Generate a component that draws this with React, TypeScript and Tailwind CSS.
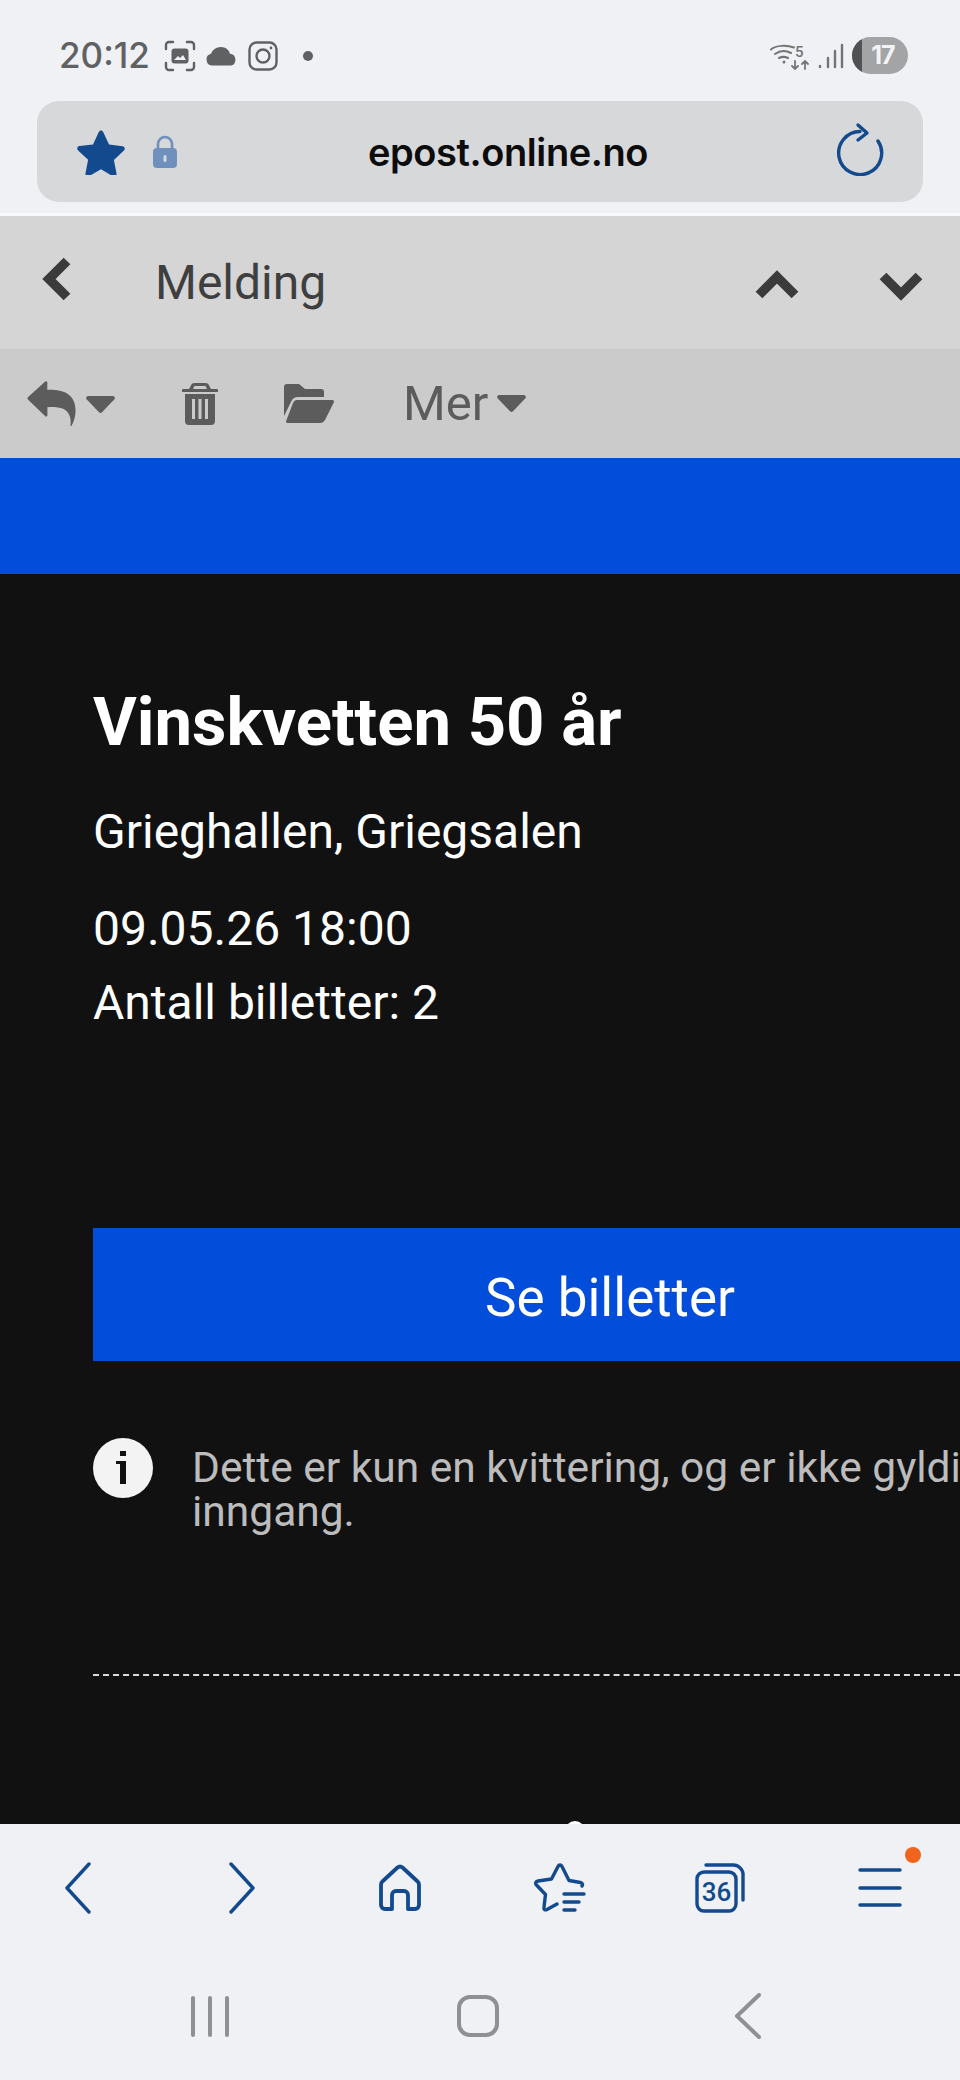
const blue = "#134a8e";

function Screenshot() {
	return (
		<svg width="32" height="32" viewBox="0 0 32 32" fill="none" stroke="#606162" strokeWidth="2.4" strokeLinecap="round">
			<path d="M2 9V5a3 3 0 0 1 3-3h4M23 2h4a3 3 0 0 1 3 3v4M30 23v4a3 3 0 0 1-3 3h-4M9 30H5a3 3 0 0 1-3-3v-4" />
			<rect x="7.5" y="8.5" width="17" height="15" rx="3" fill="#606162" stroke="none" />
			<path d="M10 20l4-4 2 2 3-3 3 5z" fill="#eff1f5" stroke="none" />
		</svg>
	);
}

function Cloud() {
	return (
		<svg width="33" height="20" viewBox="0 0 32 20" fill="#606162">
			<path d="M7 19.5a6 6 0 0 1-1.5-11.800A10 10 0 0 1 15.500 1a9.500 9.500 0 0 1 9 6.800 6 6 0 0 1 1.200 11.700z" />
		</svg>
	);
}

function Instagram() {
	return (
		<svg width="30" height="30" viewBox="0 0 30 30" fill="none" stroke="#606162" strokeWidth="2.4">
			<rect x="1.5" y="1.5" width="27" height="27" rx="7" />
			<circle cx="15" cy="15" r="6.5" />
			<circle cx="23" cy="7" r="1.4" fill="#606162" stroke="none" />
		</svg>
	);
}

function Wifi5g() {
	return (
		<svg width="40" height="28" viewBox="0 0 40 28" fill="none" stroke="#737475" strokeWidth="2" strokeLinecap="round">
			<path d="M1 7.500C6 3 17 3 24 5.500M5 12c5-3.500 11-3.500 16-1M9 16c3-1.500 6-1.500 9 0" />
			<circle cx="14" cy="20" r="1.500" fill="#737475" stroke="none" />
			<path d="M25 19v8M22 24l3 3 3-3M35 27v-8M32 22l3-3 3 3" strokeWidth="1.800" />
			<text x="25" y="15" fontSize="15" fontFamily="Roboto, sans-serif" fill="#737475" stroke="none" fontWeight="500">5</text>
		</svg>
	);
}

function Signal() {
	return (
		<svg width="26" height="26" viewBox="0 0 26 26" fill="none" stroke="#737475" strokeWidth="2.400" strokeLinecap="round">
			<path d="M2 24v-1M10 24v-9M17 24V8M24 24V2" />
		</svg>
	);
}

function Reload() {
	return (
		<svg width="48" height="54" viewBox="0 0 48 54" fill="none" stroke={blue} strokeWidth="3.400" strokeLinecap="round" strokeLinejoin="round">
			<path d="M42 19A21.500 21.500 0 1 1 24 9.500" />
			<path d="M22 3l9 8-9 7" />
		</svg>
	);
}

function Caret() {
	return (
		<svg width="29" height="17" viewBox="0 0 27 16" fill="#5c5c5c">
			<path d="M2 0h23a2 2 0 0 1 1.400 3.400L14.900 15.200a2 2 0 0 1-2.800 0L.6 3.400A2 2 0 0 1 2 0z" />
		</svg>
	);
}

function Reply() {
	return (
		<svg width="49" height="45" viewBox="0 0 46 43" fill="#5c5c5c">
			<path d="M17 .5c1-.7 2-.2 2 1.200V8.500c14-.5 27 3 27 20 0 6-2 11-4 14.500-.4.500-1 .2-.9-.5 1-7-1-13-7-16-4-1.500-10-2-15-1.500v7.500c0 1.400-1 1.900-2 1.200L.7 18c-.9-.8-.9-2 0-2.800z" />
		</svg>
	);
}

function Trash() {
	return (
		<svg width="36" height="42" viewBox="0 0 36 42" fill="#5c5c5c">
			<path fillRule="evenodd" d="M12 0h12a3 3 0 0 1 2.600 1.500L29 6h6a1 1 0 0 1 1 1v2H0V7a1 1 0 0 1 1-1h6l2.400-4.500A3 3 0 0 1 12 0zm.5 3L11 6h14l-1.500-3z" />
			<path fillRule="evenodd" d="M3 11h30v27a4 4 0 0 1-4 4H7a4 4 0 0 1-4-4zm7 5v20h3V16zm6.500 0v20h3V16zm6.500 0v20h3V16z" />
		</svg>
	);
}

function Folder() {
	return (
		<svg width="50" height="40" viewBox="0 0 50 40" fill="#5c5c5c">
			<path d="M0 3a3 3 0 0 1 3-3h12l6 5h16a3 3 0 0 1 3 3v5H14c-3 0-5 1-6.500 4L0 32z" />
			<path d="M13 16h35c2 0 2.500 1.500 1.500 3L41 36c-1 2-3 3-5 3H4c-2 0-2.500-1.500-1.500-3L9 19c1-2 2-3 4-3z" />
		</svg>
	);
}

function Chevron({ d, w, h }: { d: string; w: number; h: number }) {
	return (
		<svg width={w} height={h} viewBox={`0 0 ${w} ${h}`} fill="none" stroke="#3b3b3b" strokeWidth="9.500" strokeLinejoin="miter" className="block">
			<path d={d} />
		</svg>
	);
}

function SideNavIcon({ d }: { d: string }) {
	return (
		<svg width="28" height="52" viewBox="0 0 28 52" fill="none" stroke={blue} strokeWidth="3.400" strokeLinecap="round" strokeLinejoin="round">
			<path d={d} />
		</svg>
	);
}

function HomeIcon() {
	return (
		<svg width="46" height="48" viewBox="0 0 46 48" fill="none" stroke={blue} strokeWidth="3.800" strokeLinejoin="round">
			<path d="M4 20.500a4 4 0 0 1 1.400-3L20.500 3.500a3.800 3.800 0 0 1 5 0l15.100 14a4 4 0 0 1 1.400 3V41a4 4 0 0 1-4 4H31V31a4 4 0 0 0-4-4h-8a4 4 0 0 0-4 4v14H8a4 4 0 0 1-4-4z" />
		</svg>
	);
}

function StarList() {
	return (
		<svg width="52" height="50" viewBox="0 0 52 50" fill="none" stroke={blue} strokeWidth="3.400" strokeLinecap="round" strokeLinejoin="round">
			<path d="M48 23c1-1.500.5-3-1.500-3.500L35 17.500 28 3.500c-1-2-3-2-4 0L17.500 16 4 18c-2.500.5-3 2.500-1.500 4l9 9.500L10 44c-.5 2.500 1 3.500 3 2.500L23 41" />
			<path d="M30 31h20M30 39h15M30 47h11" />
		</svg>
	);
}

function TabsIcon() {
	return (
		<div className="relative w-[50px] h-[50px]">
			<svg className="absolute inset-0" width="50" height="50" viewBox="0 0 50 50" fill="none" stroke={blue} strokeWidth="3.400" strokeLinecap="round">
				<path d="M11 2h26a10 10 0 0 1 11 11v24" />
				<rect x="2" y="9" width="39" height="39" rx="7" />
			</svg>
			<span className="absolute left-[2px] top-[9px] w-[39px] h-[39px] flex items-center justify-center font-['Roboto',sans-serif] font-medium text-[26px] leading-none text-[#134a8e]">36</span>
		</div>
	);
}

function MenuIcon() {
	return (
		<div className="relative">
			<svg width="44" height="42" viewBox="0 0 44 42" fill="none" stroke={blue} strokeWidth="3.400" strokeLinecap="round" className="block">
				<path d="M2 3h40M2 21h40M2 38h40" />
			</svg>
			<span className="absolute right-[-19px] top-[-20px] w-4 h-4 rounded-full bg-[#f0641e]"></span>
		</div>
	);
}

export default function App() {
	return (
		<div className="w-[960px] h-[2080px] flex flex-col overflow-hidden bg-[#eff1f5] font-['Roboto',sans-serif]">
			{/* status bar */}
			<div className="h-[101px] shrink-0 flex items-center pl-[59px] pr-[52px] pt-[10px]">
				<span className="font-['Inter',sans-serif] font-medium text-[35px] leading-none text-[#606162] w-[105px]">20:12</span>
				<Screenshot />
				<div className="ml-[9px]"><Cloud /></div>
				<div className="ml-[10px]"><Instagram /></div>
				<span className="ml-[25px] w-[10px] h-[10px] rounded-full bg-[#606162]"></span>
				<div className="ml-auto"><Wifi5g /></div>
				<div className="ml-[8px]"><Signal /></div>
				<div className="relative ml-[8px] w-[56px] h-[37px] rounded-full bg-[#a3a4a6] overflow-hidden flex items-center justify-center pl-[6px]">
					<span className="absolute left-0 top-0 bottom-0 w-[10px] bg-[#505152]"></span>
					<span className="relative font-['Inter',sans-serif] font-bold text-[25px] leading-none text-[#f2f3f5] tracking-[-1px]">17</span>
				</div>
			</div>

			{/* address bar */}
			<div className="h-[101px] shrink-0 mx-[37px] rounded-[22px] bg-[#d6d8da] relative flex items-center pl-[40px] pr-[39px]">
				<svg width="48" height="46" viewBox="0 0 48 46" fill={blue}>
					<path d="M24 1.500c1 0 1.800.6 2.200 1.500l5.800 12.500 13.500 1.800c2.200.3 3 2.800 1.400 4.300l-10 9.400 2.600 13.400c.4 2.200-1.900 3.800-3.800 2.800L24 40.300l-11.700 6.700c-1.900 1-4.200-.6-3.800-2.800l2.600-13.400-10-9.400c-1.600-1.500-.8-4 1.400-4.300L16 15.500 21.800 3c.4-.9 1.200-1.500 2.200-1.500z" />
				</svg>
				<svg className="ml-[27px]" width="26" height="34" viewBox="0 0 26 34" fill="#6f90bd">
					<path d="M6 14V9a7 7 0 0 1 14 0v5" fill="none" stroke="#6f90bd" strokeWidth="2.600" />
					<rect x="1" y="13" width="24" height="20" rx="4" />
					<rect x="11.500" y="20" width="3" height="7" rx="1.500" fill="#d6d8da" />
				</svg>
				<span className="absolute left-[56px] right-0 text-center font-['Inter',sans-serif] font-semibold text-[38px] leading-none text-[#0c0c0c] tracking-[-0.4px]">epost.online.no</span>
				<div className="ml-auto pb-[6px]"><Reload /></div>
			</div>
			<div className="h-[11px] shrink-0"></div>
			<div className="h-[3px] shrink-0 bg-[#f8f9fb]"></div>

			{/* header */}
			<div className="h-[133px] shrink-0 bg-[#d5d5d5] flex items-center pl-[41px] pr-[35px]">
				<div className="mb-[7px]"><Chevron w={32} h={48} d="M26 6L8 24l18 18" /></div>
				<span className="ml-[82px] text-[48px] leading-none text-[#3f3f3f]">Melding</span>
				<div className="ml-auto mt-[4px]"><Chevron w={48} h={32} d="M6 26L24 8l18 18" /></div>
				<div className="ml-[76px] mt-[6px]"><Chevron w={48} h={32} d="M6 6l18 18L42 6" /></div>
			</div>

			{/* toolbar */}
			<div className="h-[109px] shrink-0 bg-[#cbcbcb] flex items-center pl-[27px] text-[#5c5c5c]">
				<Reply />
				<div className="ml-[10px] pt-[2px]"><Caret /></div>
				<div className="ml-[67px]"><Trash /></div>
				<div className="ml-[66px]"><Folder /></div>
				<span className="ml-[69px] text-[49px] leading-none">Mer</span>
				<div className="ml-[9px]"><Caret /></div>
			</div>

			<div className="h-[116px] shrink-0 bg-[#034ddb]"></div>

			{/* message */}
			<div className="relative h-[1250px] shrink-0 bg-[#111112] pl-[93px] text-white overflow-hidden">
				<h1 className="pt-[111px] text-[67px] leading-[75px] font-bold whitespace-nowrap">Vinskvetten 50 år</h1>
				<p className="mt-[45px] text-[48px] leading-[54px] whitespace-nowrap">Grieghallen, Griegsalen</p>
				<p className="mt-[43px] text-[48px] leading-[54px]">09.05.26 18:00</p>
				<p className="mt-[20px] text-[48px] leading-[54px]">Antall billetter: 2</p>
				<div className="mt-[198px] w-[1034px] h-[133px] bg-[#034ddb] flex items-center justify-center pt-[8px] text-[53px]">Se billetter</div>
				<div className="mt-[77px] flex w-[1200px]">
					<div className="w-[60px] h-[60px] rounded-full bg-[#f3f3f3] shrink-0 flex flex-col items-center pt-[13px]">
						<span className="w-[6px] h-[5px] bg-[#111112]"></span>
						<span className="relative mt-[5px] w-[6px] h-[23px] bg-[#111112]">
							<span className="absolute left-[-4px] top-0 w-[4px] h-[3px] bg-[#111112]"></span>
						</span>
					</div>
					<p className="ml-[39px] mt-[8px] text-[#bcbcbc] text-[42.5px] leading-[44px]">Dette er kun en kvittering, og er ikke gyldig som<br />inngang.</p>
				</div>
				<div className="mt-[140px] h-0 border-t-2 border-dashed border-[#d9d9d9]"></div>
				<span className="absolute left-[565px] bottom-[-17px] w-[20px] h-[20px] rounded-full bg-white"></span>
			</div>

			{/* browser nav */}
			<div className="h-[128px] shrink-0 grid grid-cols-6 items-center justify-items-center pb-[12px] pt-[12px]">
				<div className="mr-[5px]"><SideNavIcon d="M25 2L3 26l22 24" /></div>
				<div className="ml-[4px]"><SideNavIcon d="M3 2l22 24L3 50" /></div>
				<HomeIcon />
				<StarList />
				<TabsIcon />
				<MenuIcon />
			</div>

			{/* android nav */}
			<div className="flex-1 flex items-center text-[#8f9092]">
				<div className="ml-[191px] flex gap-[13px]">
					<span className="w-[4px] h-[41px] rounded-full bg-[#8f9092]"></span>
					<span className="w-[4px] h-[41px] rounded-full bg-[#8f9092]"></span>
					<span className="w-[4px] h-[41px] rounded-full bg-[#8f9092]"></span>
				</div>
				<span className="ml-[228px] w-[42px] h-[42px] rounded-[13px] border-[4px] border-[#8f9092]"></span>
				<svg className="ml-[235px]" width="28" height="46" viewBox="0 0 28 46" fill="none" stroke="#8f9092" strokeWidth="4" strokeLinecap="round" strokeLinejoin="round">
					<path d="M25 2L3 23l22 21" />
				</svg>
			</div>
		</div>
	);
}
